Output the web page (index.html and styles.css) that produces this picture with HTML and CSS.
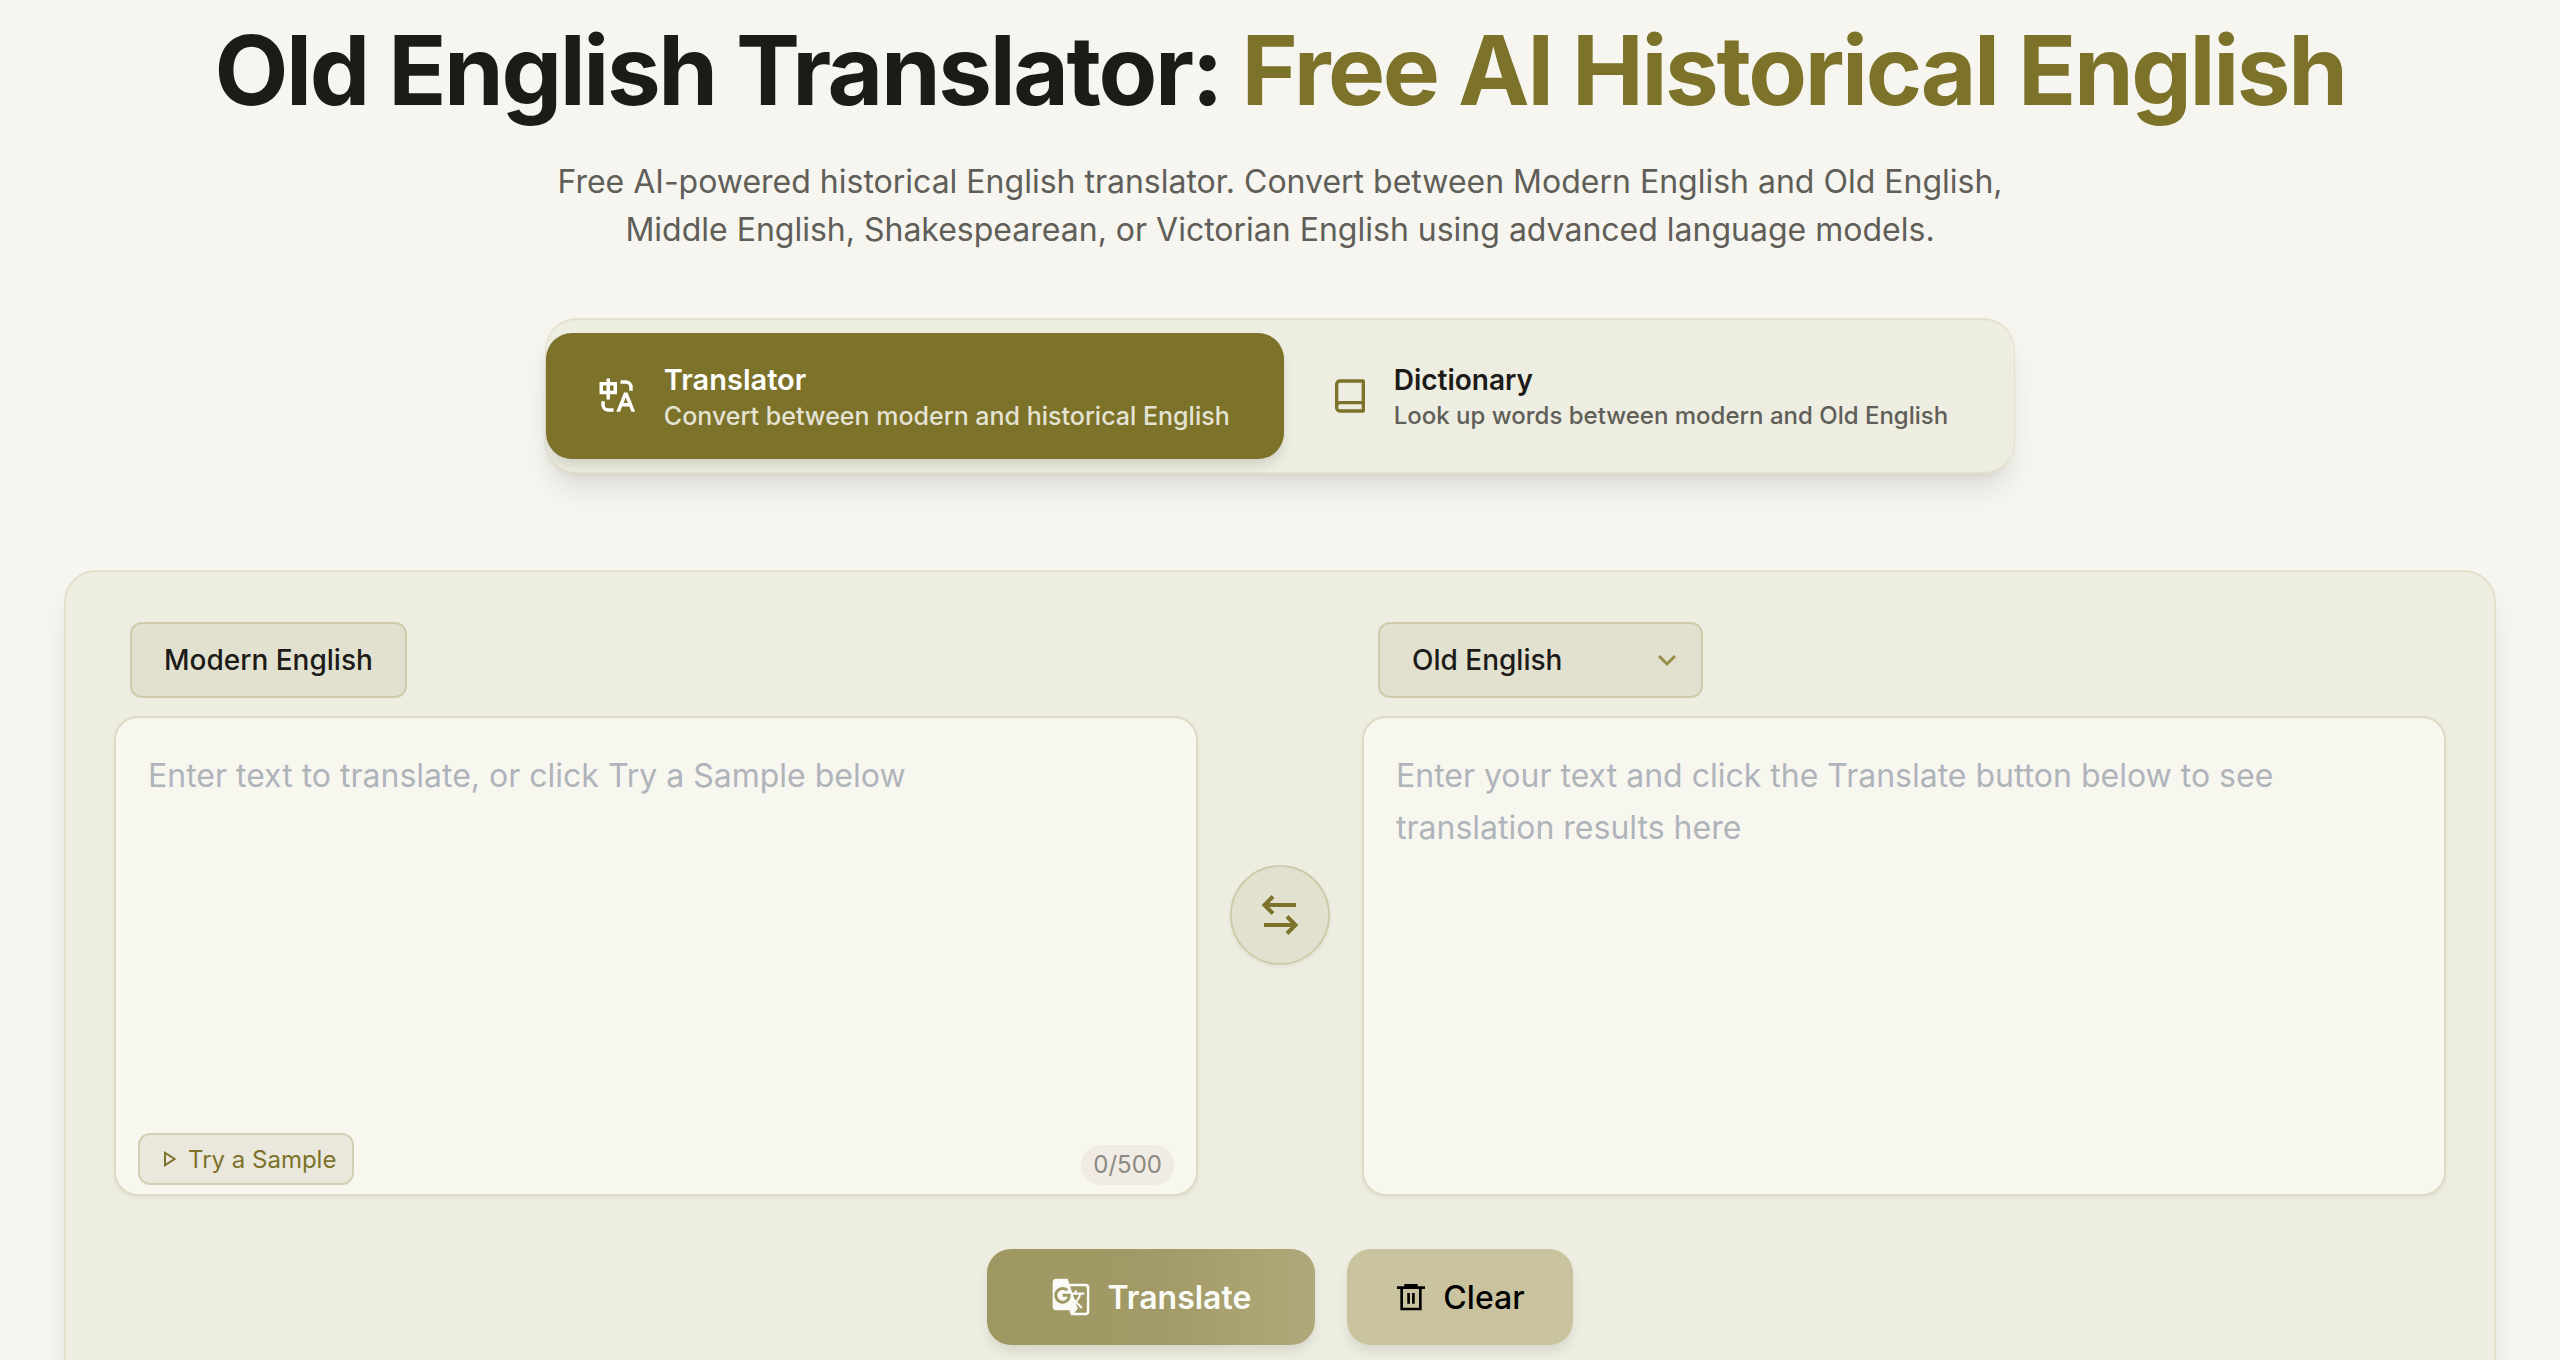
FILE: index.html
```html
<!DOCTYPE html>
<html lang="en">
<head>
<meta charset="utf-8">
<meta name="viewport" content="width=device-width, initial-scale=1">
<title>Old English Translator</title>
<link rel="stylesheet" href="styles.css">
</head>
<body>
<header class="hero">
  <h1 class="hero-title">Old English Translator: <span class="accent">Free AI Historical English</span></h1>
  <p class="hero-text">Free AI-powered historical English translator. Convert between Modern English and Old English, Middle English, Shakespearean, or Victorian English using advanced language models.</p>
</header>

<nav class="tabs" aria-label="Tools">
  <button type="button" class="tab tab-active">
    <svg class="tab-icon" viewBox="0 0 24 24" fill="currentColor" aria-hidden="true"><path d="M5 15v2a2 2 0 0 0 1.85 1.995L7 19h3v2H7a4 4 0 0 1-4-4v-2h2zm13-5 4.4 11h-2.155l-1.201-3h-4.09l-1.199 3h-2.154L16 10h2zm-1 2.885L15.753 16h2.492L17 12.885zM8 2v2h4v7H8v3H6v-3H2V4h4V2h2zm9 1a4 4 0 0 1 4 4v2h-2V7a2 2 0 0 0-2-2h-3V3h3zM6 6H4v3h2V6zm4 0H8v3h2V6z"/></svg>
    <span class="tab-body"><span class="tab-name">Translator</span><span class="tab-note">Convert between modern and historical English</span></span>
  </button>
  <button type="button" class="tab">
    <svg class="tab-icon" viewBox="0 0 24 24" fill="none" stroke="currentColor" stroke-width="2" stroke-linecap="round" stroke-linejoin="round" aria-hidden="true"><path d="M20 3H6a2 2 0 0 0-2 2v14a2 2 0 0 0 2 2h14V3zM20 16H6a2 2 0 0 0-2 2"/></svg>
    <span class="tab-body"><span class="tab-name">Dictionary</span><span class="tab-note">Look up words between modern and Old English</span></span>
  </button>
</nav>

<main class="panel">
  <div class="columns">
    <section class="column">
      <label class="lang" for="source">Modern English</label>
      <div class="field">
        <textarea class="box" id="source" maxlength="500" placeholder="Enter text to translate, or click Try a Sample below"></textarea>
        <button type="button" class="sample">
          <svg class="sample-icon" viewBox="0 0 24 24" fill="none" stroke="currentColor" stroke-width="2.4" aria-hidden="true"><path d="M6 4.500v15l11.500-7.500z"/></svg>
          Try a Sample
        </button>
        <span class="counter">0/500</span>
      </div>
    </section>
    <div class="swap-wrap">
      <button type="button" class="swap" aria-label="Swap languages">
        <svg class="swap-icon" viewBox="0 0 40 40" fill="none" stroke="currentColor" stroke-width="4" aria-hidden="true"><path d="M36 10H4M13 1.500 4.500 10l8.500 8.500M4 30h32M27 21.500l8.500 8.500-8.500 8.500"/></svg>
      </button>
    </div>
    <section class="column">
      <div class="select-wrap">
        <select class="lang select" aria-label="Target language"><option>Old English</option><option>Middle English</option><option>Shakespearean</option><option>Victorian English</option></select>
        <svg class="chevron" viewBox="0 0 24 24" fill="none" stroke="currentColor" stroke-width="3" aria-hidden="true"><path d="m4 8 8 8 8-8"/></svg>
      </div>
      <div class="field">
        <textarea class="box" aria-label="Translation" readonly placeholder="Enter your text and click the Translate button below to see translation results here"></textarea>
      </div>
    </section>
  </div>
  <div class="actions">
    <button type="button" class="action translate">
      <svg class="translate-icon" viewBox="0 0 24 24" fill="currentColor" aria-hidden="true"><path d="M21 4H11l-1-3H3c-1.100 0-2 .9-2 2v15c0 1.100.9 2 2 2h8l1 3h9c1.100 0 2-.9 2-2V6c0-1.100-.9-2-2-2zM7 16c-2.760 0-5-2.240-5-5s2.240-5 5-5c1.350 0 2.480.5 3.350 1.300L9.030 8.570c-.38-.36-1.040-.78-2.030-.78-1.740 0-3.150 1.440-3.150 3.210S5.260 14.210 7 14.210c2.010 0 2.840-1.440 2.920-2.410H7v-1.710h4.680c.07.31.12.61.12 1.020C11.800 13.970 9.890 16 7 16zm6.170-5.420h3.700c-.43 1.250-1.110 2.430-2.050 3.470-.31-.35-.6-.72-.86-1.100l-.79-2.370zm8.330 9.920c0 .55-.45 1-1 1H14l2-2.500-1.040-3.100 3.100 3.100.92-.92-3.300-3.250.02-.02c1.130-1.250 1.930-2.690 2.400-4.220H20v-1.300h-4.530V8h-1.290v1.290h-1.440L11.460 5.500h9.040c.55 0 1 .45 1 1v14z"/></svg>
      Translate
    </button>
    <button type="button" class="action clear">
      <svg class="clear-icon" viewBox="0 0 24 24" fill="none" stroke="currentColor" stroke-width="2" aria-hidden="true"><path d="M1.500 5h21M7 3.300h10M5 5v16h14V5M10.200 9v8M13.800 9v8"/></svg>
      Clear
    </button>
  </div>
</main>
</body>
</html>
```

FILE: styles.css
```css
* { box-sizing: border-box; }

body {
  margin: 0;
  background: #f6f5ef;
  color: #1c1b18;
  font-family: Inter, "Liberation Sans", sans-serif;
  overflow-x: hidden;
}

button, select, textarea { font: inherit; }
button { cursor: pointer; }

.hero {
  padding: 16px 64px 0;
  text-align: center;
}

.hero-title {
  margin: 0;
  font-size: 96px;
  line-height: 108px;
  font-weight: 700;
  letter-spacing: -0.025em;
}

.accent { color: #7c7229; }

.hero-text {
  max-width: 1536px;
  margin: 34px auto 0;
  font-size: 32px;
  line-height: 48px;
  color: #5f5e58;
}

.tabs {
  display: flex;
  width: fit-content;
  margin: 64px auto 0;
  padding: 13px 0;
  border: 2px solid #e3e1ce;
  border-width: 2px 1px;
  border-radius: 32px;
  background: #edede1;
  box-shadow: 0 20px 30px -6px rgba(0, 0, 0, .1), 0 8px 12px -8px rgba(0, 0, 0, .1);
}

.tab {
  display: flex;
  align-items: center;
  gap: 24px;
  height: 126px;
  padding: 0 66px 0 46px;
  border: 0;
  border-radius: 26px;
  background: transparent;
  color: #7c7229;
  text-align: left;
}

.tab-icon { width: 40px; height: 40px; flex: none; }
.tab-body { display: flex; flex-direction: column; color: #5f5e58; }
.tab-name { font-size: 28px; line-height: 40px; font-weight: 600; color: #1c1b18; }
.tab-note { font-size: 24px; line-height: 32px; font-weight: 500; }

/* The selected tab is drawn one step larger. */
.tab-active {
  gap: 26px;
  padding: 0 54px 0 50px;
  background: #7c7229;
  color: #fff;
  box-shadow: 0 8px 12px -2px rgba(0, 0, 0, .12);
}
.tab-active .tab-icon { width: 42px; height: 42px; }
.tab-active .tab-body { color: #e5e3d4; }
.tab-active .tab-name { font-size: 29px; color: #fff; }
.tab-active .tab-note { font-size: 25px; }

.panel {
  margin: 96px 64px 0;
  padding: 50px 48px 64px;
  border: 2px solid #e1e0cc;
  border-radius: 32px;
  background: #edede1;
  box-shadow: 0 20px 30px -6px rgba(0, 0, 0, .1);
}

.columns {
  display: grid;
  grid-template-columns: 1fr auto 1fr;
  gap: 32px;
}

.column {
  display: flex;
  flex-direction: column;
  align-items: flex-start;
  gap: 18px;
}

.lang {
  display: flex;
  align-items: center;
  height: 76px;
  margin-left: 16px;
  padding: 0 32px;
  border: 2px solid #cfcbaa;
  border-radius: 12px;
  background: #e2e1cf;
  color: #1c1b18;
  font-size: 28px;
  font-weight: 500;
}

.select-wrap { position: relative; }
.select { width: 325px; appearance: none; }
.chevron {
  position: absolute;
  right: 24px;
  top: 26px;
  width: 24px;
  height: 24px;
  color: #978d47;
  pointer-events: none;
}

.field { position: relative; width: 100%; }

.box {
  display: block;
  width: 100%;
  height: 480px;
  padding: 32px;
  border: 2px solid #dedac6;
  border-radius: 24px;
  background: #f8f7ef;
  box-shadow: 0 2px 4px rgba(0, 0, 0, .06);
  color: #1c1b18;
  font-size: 32px;
  line-height: 52px;
  resize: none;
}
.box::placeholder { color: #afb4bb; opacity: 1; }

.sample {
  position: absolute;
  left: 24px;
  bottom: 11px;
  display: flex;
  align-items: center;
  gap: 8px;
  height: 52px;
  padding: 0 16px 0 20px;
  border: 2px solid #d3cfb4;
  border-radius: 12px;
  background: #eae8dc;
  color: #7c7229;
  font-size: 24px;
}
.sample-icon { width: 20px; height: 20px; }

.counter {
  position: absolute;
  right: 24px;
  bottom: 11px;
  padding: 0 12px;
  border-radius: 20px;
  background: #f0ebe5;
  color: #8b8981;
  font-size: 24px;
  line-height: 40px;
}

.swap-wrap { display: flex; align-items: center; padding-top: 12px; }

.swap {
  display: grid;
  place-items: center;
  width: 100px;
  height: 100px;
  padding: 0;
  border: 2px solid #cfcbaa;
  border-radius: 50%;
  background: #e2e1cf;
  color: #7c7229;
  box-shadow: 0 2px 4px rgba(0, 0, 0, .06);
}
.swap-icon { width: 40px; height: 40px; }

.actions {
  display: flex;
  justify-content: center;
  gap: 32px;
  margin-top: 53px;
}

.action {
  display: flex;
  align-items: center;
  gap: 16px;
  height: 96px;
  border: 0;
  border-radius: 24px;
  font-size: 32px;
  font-weight: 500;
  box-shadow: 0 8px 12px -2px rgba(0, 0, 0, .1);
}

.translate {
  padding: 0 64px;
  background: linear-gradient(90deg, #9e9761, #a19a66 50%, #afa87a);
  color: #fafaf6;
  font-weight: 600;
}
.translate-icon { width: 40px; height: 40px; }

.clear {
  padding: 0 48px;
  background: #c9c49f;
  color: #000;
}
.clear-icon { width: 32px; height: 32px; }
```
